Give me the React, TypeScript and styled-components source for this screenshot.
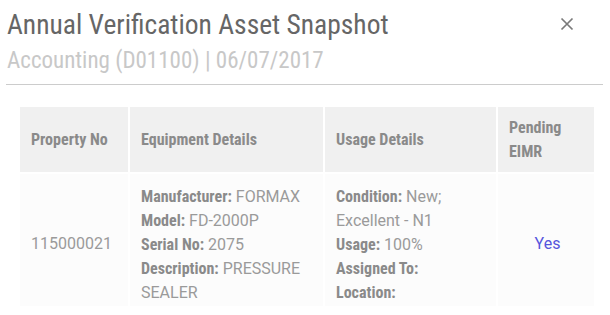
import { createGlobalStyle } from "styled-components";
import styled from "styled-components";

const GlobalStyle = createGlobalStyle`
  html, body {
    margin: 0;
    padding: 0;
    background: #ffffff;
  }
  body {
    font-family: Roboto, "Liberation Sans", sans-serif;
  }
`;

const condensed = `"Roboto Condensed", "DejaVu Sans Condensed", sans-serif`;

const Modal = styled.div`
  width: 610px;
  height: 315px;
  box-sizing: border-box;
  padding: 9px 7px 0 6px;
  overflow: hidden;
`;

const Header = styled.div`
  display: flex;
  justify-content: space-between;
  align-items: flex-start;
  border-bottom: 1px solid #cccccc;
  padding-bottom: 10px;
`;

const Titles = styled.div`
  display: flex;
  flex-direction: column;
  padding-left: 1px;
`;

const Title = styled.h1`
  margin: 0;
  font-family: ${condensed};
  font-size: 27.5px;
  line-height: 31px;
  font-weight: 400;
  color: #666666;
`;

const Subtitle = styled.div`
  margin-top: 8px;
  font-family: ${condensed};
  font-size: 23px;
  line-height: 26px;
  color: #c8c8c8;
`;

const CloseButton = styled.button`
  border: 0;
  background: none;
  padding: 0;
  margin: 7px 28px 0 0;
  width: 16px;
  height: 16px;
  cursor: pointer;
  display: flex;
  align-items: center;
  justify-content: center;
`;

const TableWrap = styled.div`
  padding: 20px 0 0 12px;
`;

const Table = styled.table`
  border-collapse: separate;
  border-spacing: 2px 2px;
  width: 578px;
  table-layout: fixed;
`;

const Th = styled.th<{ $width: number }>`
  width: ${(p) => p.$width}px;
  height: 65px;
  box-sizing: border-box;
  background: #f0f0f0;
  padding: 0 10px 0 11px;
  text-align: left;
  font-family: ${condensed};
  font-size: 16px;
  line-height: 24px;
  font-weight: 700;
  color: #8a8a8a;
`;

// $single cells hold one line and sit in the middle of the row
const Td = styled.td<{ $center?: boolean; $single?: boolean }>`
  background: #fcfcfc;
  padding: ${(p) => (p.$single ? "9px 8px 1px 11px" : "11px 8px 1px 11px")};
  vertical-align: middle;
  text-align: ${(p) => (p.$center ? "center" : "left")};
  font-size: 16px;
  line-height: 24px;
  color: #9a9a9a;
`;

const Label = styled.span`
  font-family: ${condensed};
  font-weight: 700;
  color: #8a8a8a;
`;

const Link = styled.a`
  color: #5555dd;
  text-decoration: none;
`;

const Line = ({ label, value }: { label: string; value?: string }) => (
  <div>
    <Label>{label}:</Label>
    {value ? ` ${value}` : ""}
  </div>
);

export default function App() {
  return (
    <Modal>
      <GlobalStyle />
      <Header>
        <Titles>
          <Title>Annual Verification Asset Snapshot</Title>
          <Subtitle>Accounting (D01100) | 06/07/2017</Subtitle>
        </Titles>
        <CloseButton aria-label="Close">
          <svg width="14" height="14" viewBox="0 0 14 14">
            <path d="M1.5 1.5 L12.5 12.5 M12.5 1.5 L1.5 12.5" stroke="#7a7a7a" strokeWidth="1.7" />
          </svg>
        </CloseButton>
      </Header>
      <TableWrap>
        <Table>
          <thead>
            <tr>
              <Th $width={108}>Property No</Th>
              <Th $width={193}>Equipment Details</Th>
              <Th $width={171}>Usage Details</Th>
              <Th $width={96}>Pending EIMR</Th>
            </tr>
          </thead>
          <tbody>
            <tr>
              <Td $single>115000021</Td>
              <Td>
                <Line label="Manufacturer" value="FORMAX" />
                <Line label="Model" value="FD-2000P" />
                <Line label="Serial No" value="2075" />
                <Line label="Description" value="PRESSURE SEALER" />
              </Td>
              <Td>
                <Line label="Condition" value="New; Excellent - N1" />
                <Line label="Usage" value="100%" />
                <Line label="Assigned To" />
                <Line label="Location" />
              </Td>
              <Td $single $center>
                <Link href="#">Yes</Link>
              </Td>
            </tr>
          </tbody>
        </Table>
      </TableWrap>
    </Modal>
  );
}
